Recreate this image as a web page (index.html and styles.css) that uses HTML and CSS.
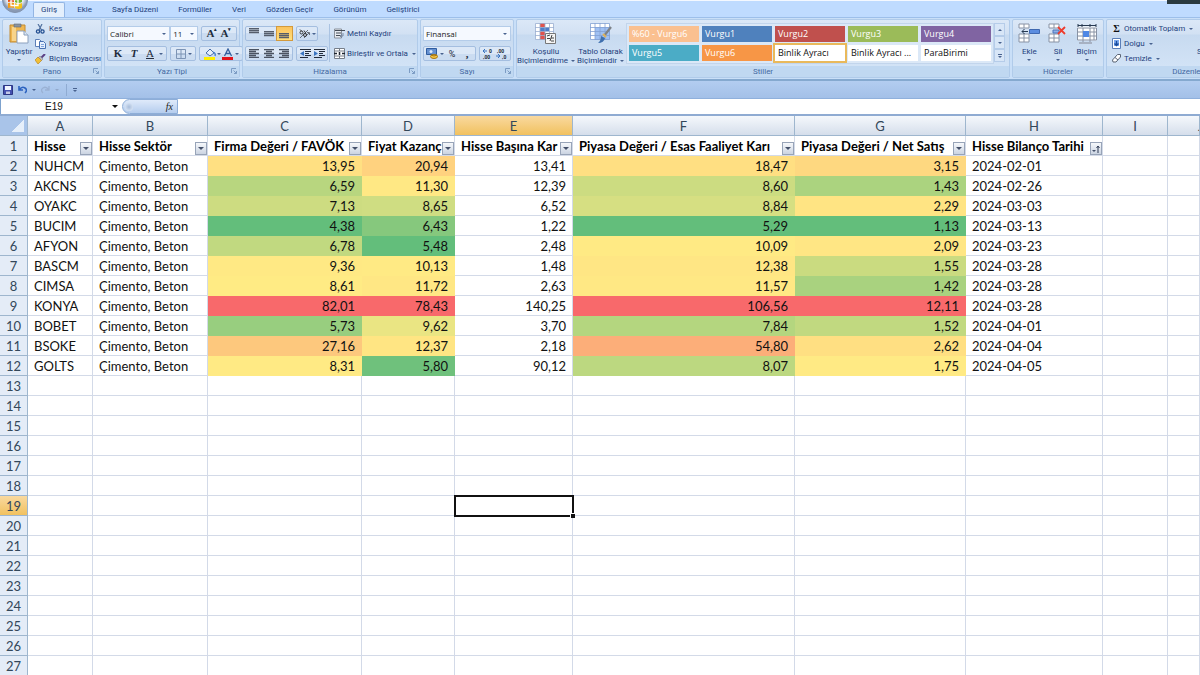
FILE: index.html
```html
<!DOCTYPE html>
<html lang="tr">
<head>
<meta charset="utf-8">
<title>E19</title>
<link rel="stylesheet" href="styles.css">
</head>
<body>
<svg class="defs" aria-hidden="true">
  <symbol id="launch" viewBox="0 0 6 6"><path d="M.5 5V.5H5M2.500 2.500l3 3M5.500 3v2.500H3" fill="none" stroke="#7c9cc4"/></symbol>
  <symbol id="lines" viewBox="0 0 10 9"><path d="M0 .5h10M0 2.500h10M0 4.500h10" stroke="#555d6b" stroke-width="1.400"/></symbol>
</svg>

<div class="overlay-corner"></div>
<nav class="tabs">
  <button class="office" aria-label="Office">
    <svg viewBox="0 0 28 28"><defs><radialGradient id="orb" cy=".4"><stop offset="0" stop-color="#fff"/><stop offset=".7" stop-color="#e3e8f0"/><stop offset="1" stop-color="#8a9ab4"/></radialGradient></defs><circle cx="15" cy="14" r="12.500" fill="url(#orb)" stroke="#8292ac"/><g transform="translate(0 2)"><path d="M8 9q3-2 6-1v6q-3-1-6 0z" fill="#e8501c"/><path d="M15 8q4 2 7 0v6q-4 2-7 0z" fill="#76b82a"/><path d="M8 15q3-1 6 0v5q-3-1-6 0z" fill="#f49b1c"/><path d="M15 15q3 2 7 0v5q-4 2-7 0z" fill="#f5c21a"/><path d="M11 11.500h7v6h-7z" fill="none" stroke="#fff" stroke-width="1.300"/></g></svg>
  </button>
  <button class="tab active">Giriş</button><button class="tab">Ekle</button><button class="tab">Sayfa Düzeni</button><button class="tab">Formüller</button><button class="tab">Veri</button><button class="tab">Gözden Geçir</button><button class="tab">Görünüm</button><button class="tab">Geliştirici</button>
</nav>

<div class="ribbon">
  <section class="group pano">
    <div class="body">
      <button class="big paste">
        <svg width="20" height="21" viewBox="0 0 20 21"><path d="M1 2h15v17H1z" fill="#efb650" stroke="#c28a31"/><path d="M3 4h4v14H3z" fill="#f8d48a"/><path d="M5 1h7v3H5z" fill="#8c949e" stroke="#5f6873" stroke-width=".6"/><path d="M8 8h7l4 4v8H8z" fill="#fff" stroke="#8ba0bd"/><path d="M15 8v4h4" fill="#dce7f5" stroke="#8ba0bd"/></svg>
        <span>Yapıştır</span><i class="dd"></i>
      </button>
      <div class="stack">
        <button><svg width="11" height="10" viewBox="0 0 11 10"><path d="M3 0l3.500 6M7 0L4 6" stroke="#52719f" stroke-width="1.200" fill="none"/><circle cx="3" cy="7.500" r="1.600" fill="none" stroke="#234f91" stroke-width="1.300"/><circle cx="7.500" cy="7.500" r="1.600" fill="none" stroke="#234f91" stroke-width="1.300"/></svg>Kes</button>
        <button><svg width="11" height="10" viewBox="0 0 11 10"><path d="M.5.500h4l2 2v5h-6z" fill="#fff" stroke="#5d7fb8"/><path d="M4.500 2.500h4l2 2v5h-6z" fill="#e5effd" stroke="#4770b2"/><path d="M6 5.500h3M6 7.500h3" stroke="#7fa3dc"/></svg>Kopyala</button>
        <button><svg width="11" height="10" viewBox="0 0 11 10"><path d="M10 0L6 4" stroke="#5b3f85" stroke-width="2"/><path d="M5 2l3 3-2 2-3-3z" fill="#b9b9c2" stroke="#777" stroke-width=".5"/><path d="M3 3l3.500 3.500L3 10 0 6z" fill="#f2c037" stroke="#b17c14" stroke-width=".6"/></svg>Biçim Boyacısı</button>
      </div>
    </div>
    <footer>Pano<svg class="launch"><use href="#launch"/></svg></footer>
  </section>

  <section class="group font">
    <div class="body col">
      <div class="line">
        <span class="combo face"><select aria-label="Yazı Tipi"><option>Calibri</option></select></span><span class="combo size"><select aria-label="Boyut"><option>11</option></select></span>
        <span class="cluster push"><button class="serif grow">A<sup>▴</sup></button><button class="serif shrink">A<sup>▾</sup></button></span>
      </div>
      <div class="line">
        <span class="cluster bui"><button class="serif">K</button><button class="serif"><em>T</em></button><button class="serif thin"><u>A</u></button><i class="dd"></i></span>
        <span class="cluster"><button aria-label="Kenarlıklar"><svg width="10" height="10" viewBox="0 0 10 10"><path d="M.5.500h9v9h-9zM5 0v10M0 5h10" fill="none" stroke="#7d94b5"/></svg></button><i class="dd"></i></span>
        <span class="cluster push"><button aria-label="Dolgu Rengi"><svg width="12" height="12" viewBox="0 0 12 12"><path d="M2 5l4-4 4 4-4 3z" fill="#e4eefb" stroke="#4a6fa8"/><path d="M9 4q3 1 2 4" fill="none" stroke="#3e78c8" stroke-width="1.300"/><path d="M0 9h11v3H0z" fill="#ffef00"/></svg></button><i class="dd"></i><button aria-label="Yazı Rengi"><svg width="12" height="12" viewBox="0 0 12 12"><path d="M2.500 8L6 1l3.500 7M4 5.500h4" fill="none" stroke="#34609f" stroke-width="1.300"/><path d="M0 9h11v3H0z" fill="#e3141c"/></svg></button><i class="dd"></i></span>
      </div>
    </div>
    <footer>Yazı Tipi<svg class="launch"><use href="#launch"/></svg></footer>
  </section>

  <section class="group align">
    <div class="body">
      <div class="col left">
        <div class="line">
          <span class="cluster three"><button aria-label="Üste"><svg class="top" width="10" height="9"><use href="#lines"/></svg></button><button aria-label="Ortaya"><svg class="mid" width="10" height="9"><use href="#lines"/></svg></button><button class="on" aria-label="Alta"><svg class="low" width="10" height="9"><use href="#lines"/></svg></button></span>
          <span class="cluster"><button aria-label="Yön"><svg width="12" height="10" viewBox="0 0 12 10"><path d="M1 9L9 1M5 9l5-5M8 3.500h2.500V6" fill="none" stroke="#666e79"/><circle cx="2.500" cy="3.500" r="1.500" fill="none" stroke="#333"/><circle cx="6" cy="6" r="1.500" fill="none" stroke="#333"/><path d="M1 .5l2 2M5 1.500l2 3" stroke="#333"/></svg></button><i class="dd"></i></span>
        </div>
        <div class="line">
          <span class="cluster three"><button aria-label="Sola"><svg width="10" height="9"><path d="M0 .5h10M0 2.500h7M0 4.500h10M0 6.500h7M0 8.500h10" stroke="#4b5361" stroke-width="1.300"/></svg></button><button aria-label="Ortala"><svg width="10" height="9"><path d="M0 .5h10M2 2.500h6M0 4.500h10M2 6.500h6M0 8.500h10" stroke="#4b5361" stroke-width="1.300"/></svg></button><button aria-label="Sağa"><svg width="10" height="9"><path d="M0 .5h10M3 2.500h7M0 4.500h10M3 6.500h7M0 8.500h10" stroke="#4b5361" stroke-width="1.300"/></svg></button></span>
          <span class="cluster"><button aria-label="Girintiyi Azalt"><svg width="11" height="9"><path d="M0 .5h11M5 2.500h6M5 4.500h4M5 6.500h6M0 8.500h8" stroke="#222c3b"/><path d="M4 2v5L0 4.500z" fill="#3974c0"/></svg></button><button aria-label="Girintiyi Artır"><svg width="11" height="9"><path d="M0 .5h11M5 2.500h6M5 4.500h4M5 6.500h6M0 8.500h8" stroke="#222c3b"/><path d="M0 2v5l4-2.500z" fill="#3974c0"/></svg></button></span>
        </div>
      </div>
      <div class="col right">
        <button class="text"><svg width="11" height="11" viewBox="0 0 11 11"><path d="M.5 1h7v9h-7z" fill="#e6eaf0" stroke="#8a919b"/><path d="M1 2.500h10M2 5h5M2 7.500h4" stroke="#454c56"/><path d="M9 5v3H6M8 6L6 8l2 2" fill="none" stroke="#7687a0"/></svg>Metni Kaydır</button>
        <button class="text"><svg width="11" height="11" viewBox="0 0 11 11"><path d="M.5.500h10v10H.500zM0 3h11M0 8h11M5.500 0v3M5.500 8v3" fill="#fff" stroke="#777f8a"/><path d="M0 5.500h3M8 5.500h3M5.500 4v3" stroke="#1c2430" stroke-width="1.500"/></svg>Birleştir ve Ortala<i class="dd"></i></button>
      </div>
    </div>
    <footer>Hizalama<svg class="launch"><use href="#launch"/></svg></footer>
  </section>

  <section class="group number">
    <div class="body col">
      <div class="line"><span class="combo wide"><select aria-label="Sayı Biçimi"><option>Finansal</option></select></span></div>
      <div class="line">
        <span class="cluster money"><button aria-label="Finansal Sayı Biçimi"><svg width="12" height="11" viewBox="0 0 12 11"><path d="M.5.500h10v6H.500z" fill="#6490d0" stroke="#2f5c9f"/><circle cx="5" cy="3.500" r="1.500" fill="#dceafd"/><ellipse cx="8" cy="8.500" rx="3.500" ry="2" fill="#f3c443" stroke="#a87814"/><path d="M5 7q3 2 6 0" fill="none" stroke="#a87814"/></svg></button><i class="dd"></i><button class="pct">%</button><button class="comma">,</button></span>
        <span class="cluster push"><button aria-label="Ondalık Artır"><svg width="12" height="12" viewBox="0 0 12 12"><path d="M1 3h4M3 1L1 3l2 2" fill="none" stroke="#3974c0"/><text x="7" y="5">0</text><text x="1" y="11">,00</text></svg></button><button aria-label="Ondalık Azalt"><svg width="12" height="12" viewBox="0 0 12 12"><path d="M0 8h4M2 6l2 2-2 2" fill="none" stroke="#3974c0"/><text x="1" y="5">,00</text><text x="6" y="11">,0</text></svg></button></span>
      </div>
    </div>
    <footer>Sayı<svg class="launch"><use href="#launch"/></svg></footer>
  </section>

  <section class="group styles">
    <div class="body">
      <button class="big cond"><svg width="22" height="21" viewBox="0 0 22 21"><path d="M.5.500h18v16H.500z" fill="#fff"/><path d="M5 0h5v4H5zM5 8h5v9H5z" fill="#e0534c"/><path d="M5 4h9v4H5z" fill="#4e7fca"/><path d="M.5.500h18v16H.500zM0 4.500h19M0 8.500h19M0 12.500h19M5 0v17M10 0v17M14.500 0v17" fill="none" stroke="#9aaed0" stroke-width=".8"/><path d="M10.500 10.500h10v10h-10z" fill="#f5f5f5" stroke="#777"/><path d="M12 13l3-1M12 15.500h3M17 12l-2 6M16 15h3M16 18h3" stroke="#444"/></svg><span>Koşullu</span><span>Biçimlendirme<i class="dd"></i></span></button>
      <button class="big tbl"><svg width="22" height="21" viewBox="0 0 22 21"><path d="M.5.500h19v16H.500z" fill="#fff"/><path d="M5 4h15v13H5z" fill="#9fc0f3"/><path d="M.5.500h19v16H.500zM0 4.500h20M0 8.500h20M0 12.500h20M5 0v17M10 0v17M15 0v17" fill="none" stroke="#83a1d3" stroke-width=".8"/><path d="M21 4l-7 9" stroke="#7d8288" stroke-width="2.200"/><path d="M11 13l4 2q-1 5-7 5 3-2 3-7z" fill="#3e6fae"/><path d="M13 11l3 3" stroke="#e0b35b" stroke-width="2"/></svg><span>Tablo Olarak</span><span>Biçimlendir<i class="dd"></i></span></button>
      <div class="gallery">
        <button class="a60">%60 - Vurgu6</button><button class="a1">Vurgu1</button><button class="a2">Vurgu2</button><button class="a3">Vurgu3</button><button class="a4">Vurgu4</button>
        <button class="a5">Vurgu5</button><button class="a6">Vurgu6</button><button class="plain chosen">Binlik Ayracı</button><button class="plain">Binlik Ayracı ...</button><button class="plain">ParaBirimi</button>
      </div>
      <div class="scroll"><button aria-label="Yukarı"><i class="dd up"></i></button><button aria-label="Aşağı"><i class="dd"></i></button><button aria-label="Diğer"><i class="dd more"></i></button></div>
    </div>
    <footer>Stiller</footer>
  </section>

  <section class="group cells">
    <div class="body">
      <button class="big"><svg width="22" height="21" viewBox="0 0 22 21"><path d="M1 1h10v4H1zM1 11h10v8H1zM1 15h10M6 1v4M6 11v8" fill="#fff" stroke="#8892a4"/><path d="M11.500 6.500h10v4h-10z" fill="#5b8de0" stroke="#3f68b0"/><path d="M10 8.500H4M6.500 6L4 8.500 6.500 11" fill="none" stroke="#273951"/></svg><span>Ekle</span><i class="dd"></i></button>
      <button class="big"><svg width="22" height="21" viewBox="0 0 22 21"><path d="M2 1h10v4H2zM2 11h10v8H2zM2 15h10M7 1v4M7 11v8" fill="#fff" stroke="#8892a4"/><path d="M6 7h6v3H6z" fill="#8fb0e8" stroke="#4e75b8"/><path d="M11 4l7 7M18 4l-7 7" stroke="#ee3b2d" stroke-width="1.800"/></svg><span>Sil</span><i class="dd"></i></button>
      <button class="big"><svg width="22" height="21" viewBox="0 0 22 21"><path d="M1.500 3.500h19v14h-19z" fill="#fff"/><path d="M2 2.500h18M2 1v3M6 1v3M14 1v3M20 1v3" stroke="#273951"/><path d="M1.500 5h19v12h-19zM1 9h20M1 13h20M7 5v14M14 5v14M18 5v12" fill="none" stroke="#8892a4"/><path d="M7 8h6v6H7z" fill="#4f87e4"/><path d="M3 20h13" stroke="#9ba3b2" stroke-width="1.500"/></svg><span>Biçim</span><i class="dd"></i></button>
    </div>
    <footer>Hücreler</footer>
  </section>

  <section class="group edit">
    <div class="body">
      <div class="stack">
        <button><b class="sigma">Σ</b>Otomatik Toplam<i class="dd"></i></button>
        <button><svg width="9" height="11" viewBox="0 0 9 11"><path d="M.5.500h8v10h-8z" fill="#fff" stroke="#5a7fb9"/><path d="M2 2h5v6H2z" fill="#7aa7ed"/><path d="M4.500 3v4M2.500 5.500l2 2 2-2" fill="none" stroke="#174a9c" stroke-width="1.300"/></svg>Dolgu<i class="dd"></i></button>
        <button><svg width="9" height="9" viewBox="0 0 9 9"><path d="M.5 6l5-5.500h3V3L4 8H1z" fill="#fff" stroke="#5b6575"/><path d="M3 3.500L6 6" stroke="#5b6575"/></svg>Temizle<i class="dd"></i></button>
      </div>
      <button class="big sort"><span class="blank"></span><span>Sırala ve Filtre</span></button>
    </div>
    <footer>Düzenleme</footer>
  </section>
</div>

<div class="quick">
  <button aria-label="Kaydet"><svg width="10" height="10" viewBox="0 0 10 10"><path d="M.5.500h9v9h-9z" fill="#4450b0" stroke="#2c3684"/><path d="M2 1h6v4H2z" fill="#f0f4ff"/><path d="M3 6.500h4V9H3z" fill="#c3c9e8"/></svg></button>
  <button aria-label="Geri Al"><svg width="9" height="9" viewBox="0 0 9 9"><path d="M1 1v4h4M1.500 4.500Q4 1 7 3t0 5" fill="none" stroke="#2c62c0" stroke-width="1.600"/></svg></button><i class="dd"></i>
  <button aria-label="Yinele"><svg width="9" height="9" viewBox="0 0 9 9"><path d="M8 1v4H4M7.500 4.500Q5 1 2 3t0 5" fill="none" stroke="#9ab1d4" stroke-width="1.300"/></svg></button><i class="dd dim"></i>
  <span class="sep"></span><button aria-label="Özelleştir"><i class="dd more"></i></button>
</div>

<div class="formula">
  <input class="name" aria-label="Ad Kutusu" value="E19"><button class="open" aria-label="Adlar"><i class="dd"></i></button>
  <div class="fx"><span class="knob"></span><button><em>fx</em></button></div>
  <input class="value" aria-label="Formül Çubuğu">
</div>

<table class="sheet">
  <colgroup><col class="cn"><col class="ca"><col class="cb"><col class="cc"><col class="cd"><col class="ce"><col class="cf"><col class="cg"><col class="ch"><col class="ci"><col class="cj"></colgroup>
  <thead><tr><th class="corner"></th><th>A</th><th>B</th><th>C</th><th>D</th><th class="sel">E</th><th>F</th><th>G</th><th>H</th><th>I</th><th class="last">J</th></tr></thead>
  <tbody id="rows"></tbody>
</table>
<script src="sheet.js"></script>
</body>
</html>
```
FILE: styles.css
```css
* { box-sizing: border-box; }
html, body { height: 100%; }
body {
  margin: 0;
  overflow: hidden;
  background: #fff;
  font: 8px/10px Roboto, "Open Sans", sans-serif;
  color: #1e3f7d;
}
button, input, select {
  font: inherit; color: inherit; background: none; border: 0; margin: 0; padding: 0;
  border-radius: 0; outline: 0; appearance: none;
}
button { display: flex; align-items: center; justify-content: center; white-space: nowrap; }
svg { display: block; flex: none; }
.defs { position: absolute; width: 0; height: 0; }
.overlay-corner { position: absolute; top: 0; right: 0; width: 33px; height: 4px; background: #2b3a40; }

.dd { flex: none; width: 0; height: 0; border: 2px solid transparent; border-top-color: #48628f; border-bottom: 0; }
.dd.up { border-top: 0; border-bottom: 2px solid #48628f; }
.dd.more { position: relative; margin-top: 3px; }
.dd.more::before { content: ""; position: absolute; left: -2px; top: -4px; width: 4px; height: 1px; background: #48628f; }
.dd.dim { border-top-color: #93a9cb; }

.tabs { display: flex; height: 17px; padding: 1px 0 0 33px; gap: 4px; background: #bfdbff; border-top: 1px solid #f4f8ff; }
.tab { padding: 0 8px; height: 15px; }
.tab.active { background: #e4effc; border: 1px solid #93b5e3; border-bottom: 0; border-radius: 2px 2px 0 0; padding: 0 7px; }
.office { position: absolute; left: 0; top: -14px; width: 28px; height: 28px; }
.office svg { width: 28px; height: 28px; }

.ribbon { display: flex; gap: 2px; height: 64px; padding: 1px 2px; overflow: hidden; background: #c9dff8; border-top: 1px solid #9dbfea; border-bottom: 2px solid #85a9cf; }
.group { flex: none; display: flex; flex-direction: column; border: 1px solid #b0cbea; border-radius: 2px; background: linear-gradient(#dbe8f7 0, #d2e1f3 14px, #c7daf0 15px, #d6e6f8 100%); }
.group footer { position: relative; flex: none; height: 11px; line-height: 11px; text-align: center; color: #4468a2; background: #c0d8f1; }
.launch { position: absolute; right: 2px; top: 2px; width: 6px; height: 6px; }
.body { flex: 1; display: flex; min-height: 0; }
.col { display: flex; flex-direction: column; gap: 5px; padding-top: 6px; }
.body.col { padding: 6px 2px 0; }
.line { display: flex; height: 15px; gap: 3px; }
.push { margin-left: auto; }
.pano { width: 100px; }
.font { width: 136px; }
.align { width: 176px; }
.number { width: 94px; }
.styles { width: 494px; }
.cells { width: 92px; }
.edit { width: 172px; }

.big { flex-direction: column; justify-content: flex-start; padding-top: 3px; line-height: 9px; }
.big svg { margin-bottom: 3px; }
.big span { display: flex; align-items: center; gap: 3px; }
.big > .dd { margin-top: 3px; }
.paste { width: 33px; }
.stack { display: flex; flex-direction: column; padding-top: 1px; }
.stack button { height: 15px; gap: 3px; justify-content: flex-start; }
.cluster { display: flex; align-items: center; height: 15px; padding: 0 3px; border: 1px solid #a4bee0; border-radius: 2px; background: linear-gradient(#dce8f7 50%, #cbdcf1 50%); }
.cluster button { width: 14px; height: 13px; }
.serif { font: bold 11px/13px "Liberation Serif", serif; color: #222c3d; }
.thin { font-weight: 400; }
.serif sup { font-size: 5px; line-height: 5px; align-self: flex-start; }
.bui { gap: 2px; }
.combo { position: relative; display: flex; background: #f5f9ff; border: 1px solid #b4cce9; }
.combo::after { content: ""; position: absolute; right: 3px; top: 6px; border: 2px solid transparent; border-top-color: #48628f; border-bottom: 0; }
.combo select { width: 100%; padding-left: 2px; color: #222; font: 8px/12px "Open Sans", "Noto Sans", sans-serif; }
.face { width: 66px; }
.size { width: 29px; margin-left: -3px; }
.wide { flex: 1; }
.left { width: 86px; padding-left: 2px; }
.three { width: 48px; padding: 0; }
.three button { flex: 1; }
.on { background: linear-gradient(#fbc35c, #ffdf7c); box-shadow: 0 0 0 1px #d39a3c; }
.top { margin-top: -2px; }
.mid { margin-top: 4px; }
.low { margin-top: 7px; }
.left .cluster:last-child { padding: 0 1px; }
.right { border-left: 1px solid #aac3e2; padding-left: 4px; margin: 4px 0; padding-top: 2px; }
.text { height: 15px; gap: 2px; justify-content: flex-start; }
.text .dd { margin-left: 2px; }
.money { padding: 0 1px; gap: 1px; }
.pct { color: #222c3d; font-size: 9px; }
.comma { color: #222c3d; font: bold 11px/10px "Liberation Serif", serif; }
.number text { font: bold 5px "Open Sans", sans-serif; fill: #222c3d; }
.number .push { padding: 0 1px; }

.cond { width: 58px; }
.tbl { width: 51px; }
.gallery { display: grid; grid-template-columns: repeat(5, 1fr); grid-auto-rows: 16px; gap: 3px; flex: 1; margin: 3px 0 0; padding: 2px; height: 41px; border: 1px solid #c2d5ec; background: #dbe8f7; }
.gallery button { justify-content: flex-start; padding-left: 3px; color: #fff; font: 9px/14px "Open Sans", "Noto Sans", sans-serif; }
.gallery .a60 { background: #fac090; }
.gallery .a1 { background: #4f81bd; }
.gallery .a2 { background: #c0504d; }
.gallery .a3 { background: #9bbb59; }
.gallery .a4 { background: #8064a2; }
.gallery .a5 { background: #4bacc6; }
.gallery .a6 { background: #f79646; }
.gallery .plain { background: #fff; color: #111; }
.gallery .chosen { box-shadow: 0 0 0 2px #e9b95b; }
.scroll { display: grid; grid-auto-rows: 13px; width: 11px; margin: 3px 4px 0 0; height: 39px; }
.scroll button { border: 1px solid #b5cce9; background: #d8e6f7; }

.cells .body { justify-content: space-around; padding: 0 2px; }
.edit .stack { padding-left: 5px; width: 90px; }
.edit .stack svg { width: 9px; }
.edit .stack .dd { margin-left: 1px; }
.sigma { width: 9px; font: bold 10px/12px "Liberation Serif", serif; color: #111; }
.blank { height: 24px; }

.quick { display: flex; align-items: center; gap: 5px; height: 18px; padding: 0 3px; background: linear-gradient(#b3cdf0, #a3c0e8); border-bottom: 1px solid #8fb0dc; }
.sep { width: 1px; height: 12px; margin-left: 2px; background: #8fabd2; }
.quick .sep + button { margin-left: 1px; }

.formula { display: flex; height: 15px; background: #fff; border-left: 1px solid #7da2ce; }
.name { width: 106px; text-align: center; font: 10px/14px "Liberation Sans", Arial, sans-serif; color: #111; }
.open { width: 15px; }
.open .dd { border-width: 3px 3px 0; border-top-color: #111; }
.fx { display: flex; justify-content: space-between; align-items: center; width: 56px; padding: 0 4px 0 2px; border: 1px solid #8eaed8; border-radius: 8px 0 0 8px; background: linear-gradient(#dfeafa, #b5cdee); }
.fx button { font: italic 10px/12px "Liberation Serif", serif; color: #222; }
.knob { width: 8px; height: 8px; border-radius: 4px; background: radial-gradient(#a8bddb, #e5effc); }
.value { flex: 1; min-width: 0; }

.sheet { width: 100%; table-layout: fixed; border-collapse: separate; border-spacing: 0; border-top: 2px solid #8fabd2; font: 13px/17px Lato, "Open Sans", sans-serif; color: #111; }
.cn { width: 28px; }
.ca { width: 65px; }
.cb { width: 115px; }
.cc { width: 154px; }
.cd { width: 93px; }
.ce { width: 118px; }
.cf { width: 222px; }
.cg { width: 171px; }
.ch { width: 137px; }
.ci { width: 65px; }
.sheet th, .sheet td { position: relative; height: 20px; padding: 2px 6px 0; white-space: nowrap; text-align: left; border: solid #d3dae8; border-width: 0 1px 1px 0; }
.sheet thead th { padding: 2px 0 0; text-align: center; font-weight: 400; color: #33475a; background: linear-gradient(#f5f8fc, #d5deeb); border-color: #9eb6ce; }
.sheet thead .last { padding-left: 30px; text-align: left; overflow: hidden; }
.sheet thead .corner { background: linear-gradient(135deg, transparent 50%, #e6effa 50%) 12px 4px / 12px 12px no-repeat, #a9c4e9; }
.sheet tbody th { padding: 2px 0 0; text-align: center; font-weight: 400; color: #33475a; background: #e4ecf7; border-color: #9eb6ce; }
.sheet .sel { background: linear-gradient(#f9d99f, #f1c15f) !important; }
.sheet .title { font-weight: 700; color: #000; }
.sheet .num { text-align: right; }
.filter { position: absolute; right: 0; bottom: 0; width: 12px; height: 13px; background: linear-gradient(#f6f8fb, #cbd4e2); border: 1px solid #98a4b8; }
.filter .dd { border-width: 3px 3px 0; border-top-color: #44506a; }
.filter.sorted .dd { border-width: 2px 2px 0; margin-top: 4px; }
.cursor { position: absolute; inset: -1px -2px -2px -1px; border: 2px solid #111; z-index: 1; }
.cursor::after { content: ""; position: absolute; right: -3px; bottom: -3px; width: 4px; height: 4px; background: #111; border: solid #fff; border-width: 1px 0 0 1px; }
```
FILE: sheet.js
```js
const titles = ["Hisse", "Hisse Sektör", "Firma Değeri / FAVÖK", "Fiyat Kazanç", "Hisse Başına Kar", "Piyasa Değeri / Esas Faaliyet Karı", "Piyasa Değeri / Net Satış", "Hisse Bilanço Tarihi"];
const sector = "Çimento, Beton";
// Each row: values for A, C..H, then the colour-scale fills of C, D, F and G.
const data = [
  ["NUHCM", "13,95", "20,94", "13,41", "18,47", "3,15", "2024-02-01", "#ffe082", "#ffd27f", "#ffdf82", "#fed880"],
  ["AKCNS", "6,59", "11,30", "12,39", "8,60", "1,43", "2024-02-26", "#b8d67f", "#ffe884", "#ccdc81", "#abd37f"],
  ["OYAKC", "7,13", "8,65", "6,52", "8,84", "2,29", "2024-03-03", "#cddc81", "#cfdd82", "#d6df82", "#ffe483"],
  ["BUCIM", "4,38", "6,43", "1,22", "5,29", "1,13", "2024-03-13", "#63be7b", "#86c87d", "#63be7b", "#63be7b"],
  ["AFYON", "6,78", "5,48", "2,48", "10,09", "2,09", "2024-03-23", "#c1d980", "#63be7b", "#ffea84", "#ffe684"],
  ["BASCM", "9,36", "10,13", "1,48", "12,38", "1,55", "2024-03-28", "#ffe984", "#ffea84", "#ffe684", "#cadb80"],
  ["CIMSA", "8,61", "11,72", "2,63", "11,57", "1,42", "2024-03-28", "#ffeb84", "#ffe784", "#ffe884", "#a9d27f"],
  ["KONYA", "82,01", "78,43", "140,25", "106,56", "12,11", "2024-03-28", "#f8696b", "#f8696b", "#f8696b", "#f8696b"],
  ["BOBET", "5,73", "9,62", "3,70", "7,84", "1,52", "2024-04-01", "#98ce7f", "#eae583", "#b4d67f", "#c1d980"],
  ["BSOKE", "27,16", "12,37", "2,18", "54,80", "2,62", "2024-04-04", "#fdc87d", "#ffe583", "#fcae79", "#ffdf82"],
  ["GOLTS", "8,31", "5,80", "90,12", "8,07", "1,75", "2024-04-05", "#ffea84", "#6fc17c", "#bcd880", "#ffea84"]
];
const sortIcon = '<svg width="4" height="8" viewBox="0 0 4 8"><path d="M2 8V1M.5 3L2 1l1.500 2" fill="none" stroke="#2f3b55"/></svg>';

function filterButton(last) {
  return `<button class="filter${last ? " sorted" : ""}" aria-label="Filtre"><i class="dd"></i>${last ? sortIcon : ""}</button>`;
}
function dataCells(r) {
  const [a, c, d, e, f, g, h, fc, fd, ff, fg] = r;
  const num = (v, fill) => `<td class="num"${fill ? ` style="background:${fill};border-color:transparent"` : ""}>${v}</td>`;
  return `<td>${a}</td><td>${sector}</td>` + num(c, fc) + num(d, fd) + num(e) + num(f, ff) + num(g, fg) + `<td>${h}</td><td></td><td></td>`;
}
let html = "";
for (let n = 1; n <= 27; n++) {
  html += `<tr><th${n === 19 ? ' class="sel"' : ""}>${n}</th>`;
  if (n === 1) {
    html += titles.map((t, i) => `<td class="title">${t}${filterButton(i === 7)}</td>`).join("") + "<td></td><td></td>";
  } else if (n <= 12) {
    html += dataCells(data[n - 2]);
  } else {
    for (let c = 0; c < 10; c++) html += n === 19 && c === 4 ? '<td><div class="cursor"></div></td>' : "<td></td>";
  }
  html += "</tr>";
}
document.getElementById("rows").innerHTML = html;
```
